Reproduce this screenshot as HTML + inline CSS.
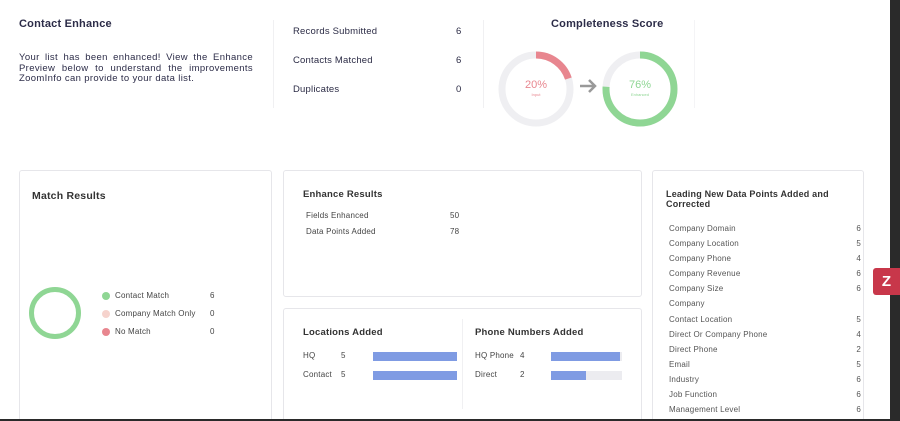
<!DOCTYPE html>
<html><head><style>
*{margin:0;padding:0;box-sizing:border-box}
html,body{width:900px;height:421px;overflow:hidden}
body{background:#fff;font-family:"Liberation Sans",sans-serif;color:#2b2b45;position:relative}
.a{position:absolute;white-space:nowrap}
.card{position:absolute;border:1px solid #e6e6ea;border-radius:3px;background:#fff;overflow:hidden}
.t{font-size:8px;color:#444;letter-spacing:.2px}
.h{font-size:10px;font-weight:bold;color:#333;letter-spacing:.2px}
.bar{position:absolute;height:9px;background:#ececf0}
.bar i{display:block;height:100%;background:#7f9be3}
</style></head><body>
<div class="a" style="left:19px;top:18px;font-size:11px;font-weight:bold;color:#2c2c48;letter-spacing:.2px">Contact Enhance</div>
<div class="a" style="left:19px;top:53px;width:234px;white-space:normal;text-align:justify;font-size:9.5px;line-height:10.5px;color:#2c2c48;letter-spacing:.35px">Your list has been enhanced! View the Enhance Preview below to understand the improvements ZoomInfo can provide to your data list.</div>
<div class="a" style="left:273px;top:20px;width:1px;height:88px;background:#f0f0f2"></div>
<div class="a" style="left:293px;top:26px;font-size:9.5px;letter-spacing:.2px">Records Submitted</div>
<div class="a" style="left:456px;top:26px;font-size:9.5px">6</div>
<div class="a" style="left:293px;top:55px;font-size:9.5px;letter-spacing:.2px">Contacts Matched</div>
<div class="a" style="left:456px;top:55px;font-size:9.5px">6</div>
<div class="a" style="left:293px;top:84px;font-size:9.5px;letter-spacing:.2px">Duplicates</div>
<div class="a" style="left:456px;top:84px;font-size:9.5px">0</div>
<div class="a" style="left:483px;top:20px;width:1px;height:88px;background:#f0f0f2"></div>
<div class="a" style="left:694px;top:20px;width:1px;height:88px;background:#f4f4f6"></div>
<div class="a" style="left:551px;top:18px;font-size:11px;font-weight:bold;color:#2c2c48;letter-spacing:.2px">Completeness Score</div>
<svg class="a" style="left:490px;top:40px" width="200" height="90">
<circle cx="46" cy="49" r="34" fill="none" stroke="#efeff2" stroke-width="7"/>
<circle cx="46" cy="49" r="34" fill="none" stroke="#e8868f" stroke-width="7" stroke-dasharray="42.7 300" transform="rotate(-90 46 49)"/>
<text x="46" y="48" text-anchor="middle" font-size="11" fill="#e8868f" font-family="Liberation Sans">20%</text>
<text x="46" y="56" text-anchor="middle" font-size="4" fill="#e8868f" font-family="Liberation Sans">Input</text>
<path d="M90 46H105M99 40L105 46L99 52" stroke="#999" stroke-width="2.5" fill="none"/>
<circle cx="150" cy="49" r="34" fill="none" stroke="#efeff2" stroke-width="7"/>
<circle cx="150" cy="49" r="34" fill="none" stroke="#8fd694" stroke-width="7" stroke-dasharray="162.3 300" transform="rotate(-90 150 49)"/>
<text x="150" y="48" text-anchor="middle" font-size="11" fill="#8fd694" font-family="Liberation Sans">76%</text>
<text x="150" y="56" text-anchor="middle" font-size="4" fill="#8fd694" font-family="Liberation Sans">Enhanced</text>
</svg>

<div class="card" style="left:19px;top:170px;width:253px;height:260px">
<div class="a h" style="left:12px;top:19px;font-size:10.5px">Match Results</div>
<svg class="a" style="left:7px;top:114px" width="56" height="56"><circle cx="28" cy="28" r="23.5" fill="none" stroke="#8fd694" stroke-width="5"/></svg>
<div class="a" style="left:82px;top:121px;width:8px;height:8px;border-radius:50%;background:#8fd694"></div>
<div class="a t" style="left:95px;top:120px">Contact Match</div><div class="a t" style="left:190px;top:120px">6</div>
<div class="a" style="left:82px;top:139px;width:8px;height:8px;border-radius:50%;background:#f6d3cd"></div>
<div class="a t" style="left:95px;top:138px">Company Match Only</div><div class="a t" style="left:190px;top:138px">0</div>
<div class="a" style="left:82px;top:157px;width:8px;height:8px;border-radius:50%;background:#e8868f"></div>
<div class="a t" style="left:95px;top:156px">No Match</div><div class="a t" style="left:190px;top:156px">0</div>
</div>

<div class="card" style="left:283px;top:170px;width:359px;height:127px">
<div class="a h" style="left:19px;top:18px;font-size:9.5px">Enhance Results</div>
<div class="a t" style="left:22px;top:40px">Fields Enhanced</div><div class="a t" style="left:166px;top:40px">50</div>
<div class="a t" style="left:22px;top:56px">Data Points Added</div><div class="a t" style="left:166px;top:56px">78</div>
</div>

<div class="card" style="left:283px;top:308px;width:359px;height:125px">
<div class="a h" style="left:19px;top:18px;font-size:9.5px">Locations Added</div>
<div class="a t" style="left:19px;top:42px">HQ</div><div class="a t" style="left:57px;top:42px">5</div>
<div class="bar" style="left:89px;top:43px;width:84px"><i style="width:100%"></i></div>
<div class="a t" style="left:19px;top:61px">Contact</div><div class="a t" style="left:57px;top:61px">5</div>
<div class="bar" style="left:89px;top:62px;width:84px"><i style="width:100%"></i></div>
<div class="a" style="left:178px;top:10px;width:1px;height:90px;background:#f0f0f2"></div>
<div class="a h" style="left:191px;top:18px;font-size:9.5px">Phone Numbers Added</div>
<div class="a t" style="left:191px;top:42px">HQ Phone</div><div class="a t" style="left:236px;top:42px">4</div>
<div class="bar" style="left:267px;top:43px;width:71px"><i style="width:97%"></i></div>
<div class="a t" style="left:191px;top:61px">Direct</div><div class="a t" style="left:236px;top:61px">2</div>
<div class="bar" style="left:267px;top:62px;width:71px"><i style="width:49%"></i></div>
</div>

<div class="card" style="left:652px;top:170px;width:212px;height:260px">
<div class="a h" style="left:13px;top:18px;font-size:9px;line-height:10px;white-space:normal;width:180px">Leading New Data Points Added and Corrected</div>
<div style="position:absolute;left:16px;top:50px;width:192px;font-size:8px;color:#555;line-height:15.1px;letter-spacing:.2px">
<div>Company Domain<span style="float:right">6</span></div>
<div>Company Location<span style="float:right">5</span></div>
<div>Company Phone<span style="float:right">4</span></div>
<div>Company Revenue<span style="float:right">6</span></div>
<div>Company Size<span style="float:right">6</span></div>
<div>Company</div>
<div>Contact Location<span style="float:right">5</span></div>
<div>Direct Or Company Phone<span style="float:right">4</span></div>
<div>Direct Phone<span style="float:right">2</span></div>
<div>Email<span style="float:right">5</span></div>
<div>Industry<span style="float:right">6</span></div>
<div>Job Function<span style="float:right">6</span></div>
<div>Management Level<span style="float:right">6</span></div>
</div>
</div>

<div class="a" style="left:890px;top:0;width:10px;height:421px;background:#2a2a2a"></div>
<div class="a" style="left:873px;top:268px;width:27px;height:27px;background:#c8374a;border-radius:3px 0 0 3px;color:#fff;font-weight:bold;font-size:15px;text-align:center;line-height:27px">Z</div>
<div class="a" style="left:0;top:419px;width:900px;height:2px;background:#2a2a2a"></div>
</body></html>
